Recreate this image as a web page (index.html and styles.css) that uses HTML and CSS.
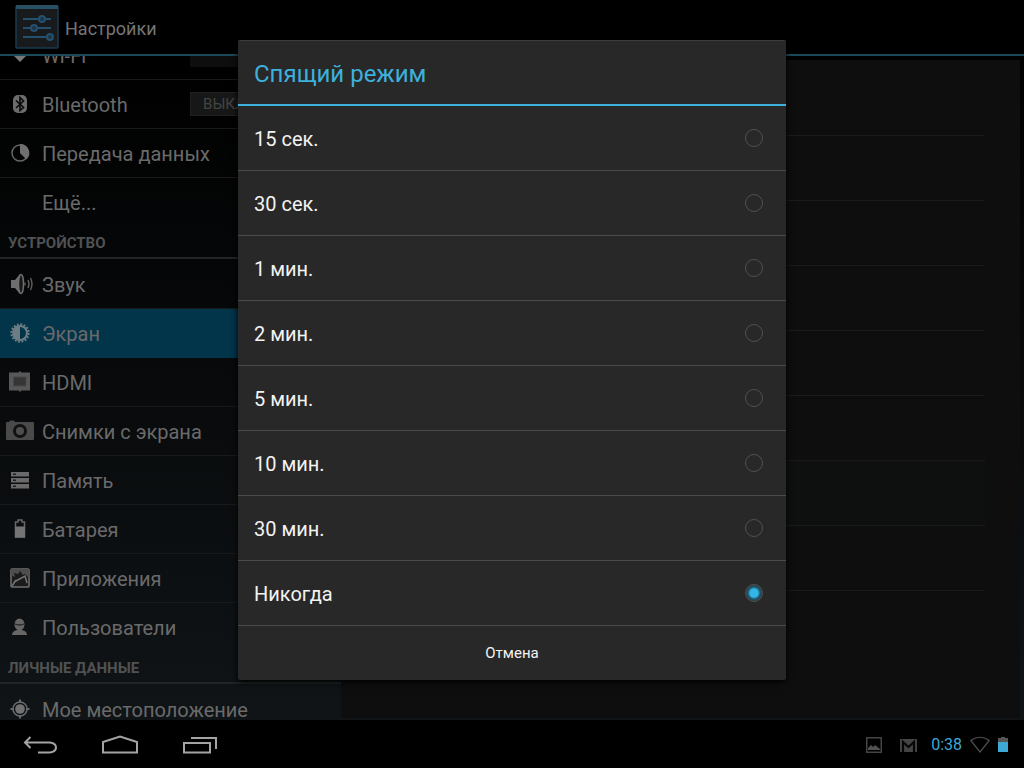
FILE: index.html
```html
<!DOCTYPE html>
<html lang="ru">
<head>
<meta charset="utf-8">
<title>Настройки</title>
<link rel="stylesheet" href="styles.css">
</head>
<body>
<header class="topbar">
  <svg class="app-icon" viewBox="0 0 44 44" aria-hidden="true">
    <rect x="1" y="1" width="42" height="42" rx="1" fill="#191a1b" stroke="#193a52" stroke-width="1.500"/>
    <rect x="1" y="0" width="42" height="4" rx="1" fill="#285063"/>
    <g stroke="#24506e" stroke-width="2" fill="#1d3444">
      <path d="M8 14h28M8 23h28M8 32h26"/>
      <circle cx="27" cy="14" r="3"/><circle cx="19" cy="23" r="3"/><circle cx="35" cy="32" r="3"/>
    </g>
  </svg>
  <h1 class="topbar-title">Настройки</h1>
</header>

<main class="content">
  <nav class="sidebar" aria-label="Разделы">
    <ul class="menu menu-scrolled">
      <li class="menu-row">
        <a class="menu-link" href="#wifi"><svg class="icon" viewBox="0 0 30 30" aria-hidden="true"><path d="M5 11a15 15 0 0 1 20 0L15 21z" fill="#777"/></svg><span>Wi-Fi</span></a>
        <button class="switch on" role="switch" aria-checked="true" aria-label="Wi-Fi"><span class="thumb"></span></button>
      </li>
      <li class="menu-row">
        <a class="menu-link" href="#bluetooth"><svg class="icon" viewBox="0 0 30 30" aria-hidden="true"><rect x="8" y="5" width="14" height="18" rx="5" fill="#6c6c6c"/><path d="M11 10.500l7.500 7-3.500 3V7.500l3.500 3.500L11 18" fill="none" stroke="#0b0b0b" stroke-width="1.600"/></svg><span>Bluetooth</span></a>
        <button class="switch" role="switch" aria-checked="false" aria-label="Bluetooth"><span class="thumb">ВЫКЛ</span></button>
      </li>
      <li class="menu-row"><a class="menu-link" href="#data"><svg class="icon" viewBox="0 0 30 30" aria-hidden="true"><circle cx="15" cy="14" r="8" fill="none" stroke="#666" stroke-width="1.500"/><path d="M15 5a9 9 0 0 1 6.500 15.500L15 14z" fill="#707070"/></svg><span>Передача данных</span></a></li>
      <li class="menu-row"><a class="menu-link" href="#more"><span class="icon"></span><span>Ещё...</span></a></li>
    </ul>
    <h2 class="category">УСТРОЙСТВО</h2>
    <ul class="menu">
      <li class="menu-row"><a class="menu-link" href="#sound"><svg class="icon" viewBox="0 0 30 30" aria-hidden="true"><path d="M6 10h4l5-6v20l-5-6H6z" fill="#6e6e6e"/><ellipse cx="16" cy="14" rx="2.500" ry="9.500" fill="#181818" stroke="#6e6e6e" stroke-width="1.500"/><path d="M20 12.500v3M23 10q2 4 0 8M25.500 8q3 6 0 12" fill="none" stroke="#666" stroke-width="1.300"/></svg><span>Звук</span></a></li>
      <li class="menu-row selected"><a class="menu-link" href="#display" aria-current="page"><svg class="icon" viewBox="0 0 30 30" aria-hidden="true"><circle cx="15" cy="14" r="8.700" fill="none" stroke="#6d7d84" stroke-width="2" stroke-dasharray="1.900 1.517"/><circle cx="15" cy="14" r="7" fill="none" stroke="#6d7d84" stroke-width="2"/><path d="M15 7a7 7 0 0 0 0 14z" fill="#6d7d84"/></svg><span>Экран</span></a></li>
      <li class="menu-row"><a class="menu-link" href="#hdmi"><svg class="icon" viewBox="0 0 30 30" aria-hidden="true"><path d="M4 4.500h10v-1h2v1h9v18h-9v1h-2v-1H4z" fill="#585858"/><rect x="8.500" y="9" width="12.500" height="9" fill="#363636" stroke="#484848"/></svg><span>HDMI</span></a></li>
      <li class="menu-row"><a class="menu-link" href="#screenshots"><svg class="icon" viewBox="0 0 30 30" aria-hidden="true"><path d="M1 6q0-1 1-1h2l1-1.500h4L10 5h18q1 0 1 1v16q0 1-1 1H2q-1 0-1-1z" fill="#4a4a4a"/><circle cx="15" cy="14" r="5.500" fill="#4e4e4e" stroke="#111" stroke-width="3"/></svg><span>Снимки с экрана</span></a></li>
      <li class="menu-row"><a class="menu-link" href="#storage"><svg class="icon" viewBox="0 0 30 30" aria-hidden="true"><path d="M6 6h18v4.500H6zM6 12h18v4.500H6zM6 18h18v4.500H6z" fill="#6a6a6a"/><path d="M8 8.200h3M8 14.200h3M8 20.200h3" stroke="#222" stroke-width="1.500"/></svg><span>Память</span></a></li>
      <li class="menu-row"><a class="menu-link" href="#battery"><svg class="icon" viewBox="0 0 30 30" aria-hidden="true"><path d="M10.500 7h2.500V5h4v2h2.500v15h-9z" fill="none" stroke="#686868" stroke-width="1.500"/><path d="M10 11.500h10v11H10z" fill="#747474"/></svg><span>Батарея</span></a></li>
      <li class="menu-row"><a class="menu-link" href="#apps"><svg class="icon" viewBox="0 0 30 30" aria-hidden="true"><rect x="6" y="5" width="18" height="18" rx="1" fill="#1b1b1b" stroke="#707070" stroke-width="1.500"/><path d="M6 5h18v9l-4-4-2 1-3-4-2 3-4-1 1 4-4-2z" fill="#4e4e4e"/><path d="M7 22l4-6M9 18l11-6 2 7" fill="none" stroke="#747474" stroke-width="1.500"/></svg><span>Приложения</span></a></li>
      <li class="menu-row"><a class="menu-link" href="#users"><svg class="icon" viewBox="0 0 30 30" aria-hidden="true"><path d="M7 22q0-4 5-5h5q5 1 5 5z" fill="#666"/><ellipse cx="14.500" cy="11.500" rx="5" ry="6" fill="#666"/><path d="M10 11q4.500 2 9 0" fill="none" stroke="#242424" stroke-width="1.300"/></svg><span>Пользователи</span></a></li>
    </ul>
    <h2 class="category">ЛИЧНЫЕ ДАННЫЕ</h2>
    <ul class="menu">
      <li class="menu-row"><a class="menu-link" href="#location"><svg class="icon" viewBox="0 0 30 30" aria-hidden="true"><circle cx="15" cy="14" r="7" fill="none" stroke="#686868" stroke-width="1.500"/><circle cx="15" cy="14" r="4.800" fill="#727272"/><path d="M15 4.500V8M15 20v3.500M5.500 14H9M21 14h3.500" stroke="#686868" stroke-width="2"/></svg><span>Мое местоположение</span></a></li>
    </ul>
  </nav>
  <section class="pane" aria-label="Экран">
    <div class="panel">
      <div class="panel-row first"></div>
      <div class="panel-row"></div>
      <div class="panel-row"></div>
      <div class="panel-row"></div>
      <div class="panel-row"></div>
      <div class="panel-row"></div>
      <div class="panel-row tinted"></div>
      <div class="panel-row"></div>
    </div>
  </section>
</main>

<footer class="navbar">
  <div class="nav-buttons">
    <button class="nav-button" aria-label="Назад"><svg width="34" height="20" viewBox="0 0 34 20"><path d="M7.500 2L2 7.500 7.500 13M2 7.500h25q6 1 6 5t-6 5H15" fill="none" stroke="#a4a4a4" stroke-width="2"/></svg></button>
    <button class="nav-button" aria-label="Домой"><svg width="36" height="20" viewBox="0 0 36 20"><path d="M1 17.500V7L18 1.500 35 7v10.500z" fill="none" stroke="#a4a4a4" stroke-width="2"/></svg></button>
    <button class="nav-button" aria-label="Недавние"><svg width="34" height="20" viewBox="0 0 34 20"><path d="M1 8h26v9.500H1zM8 3h25v11" fill="none" stroke="#a4a4a4" stroke-width="2"/></svg></button>
  </div>
  <div class="status">
    <svg width="16" height="18" viewBox="0 0 16 18" aria-hidden="true"><rect x=".750" y="1.750" width="14.500" height="14.500" fill="none" stroke="#444" stroke-width="1.500"/><path d="M2 14v-2l3-3 2 2 2-2 5 4v1z" fill="#505050"/></svg>
    <svg width="17" height="18" viewBox="0 0 17 18" aria-hidden="true"><path d="M0 3h17v13H0z" fill="#444"/><path d="M3 16V6l5.500 5L14 6v10" fill="none" stroke="#060606" stroke-width="2.200"/></svg>
    <span class="clock">0:38</span>
    <svg width="20" height="18" viewBox="0 0 20 18" aria-hidden="true"><path d="M.750 4.500q9.250-6.500 18.500 0L10 16z" fill="none" stroke="#505050" stroke-width="1.200"/></svg>
    <svg width="10" height="18" viewBox="0 0 10 18" aria-hidden="true"><path d="M0 2h3V1h4v1h3v4H0z" fill="#555"/><path d="M0 6h10v10H0z" fill="#3da9d4"/></svg>
  </div>
</footer>

<div class="overlay">
  <form class="dialog" role="dialog" aria-labelledby="dialog-title">
    <h2 class="dialog-title" id="dialog-title">Спящий режим</h2>
    <label class="option"><span class="option-text">15 сек.</span><input class="radio" type="radio" name="sleep"></label>
    <label class="option"><span class="option-text">30 сек.</span><input class="radio" type="radio" name="sleep"></label>
    <label class="option"><span class="option-text">1 мин.</span><input class="radio" type="radio" name="sleep"></label>
    <label class="option"><span class="option-text">2 мин.</span><input class="radio" type="radio" name="sleep"></label>
    <label class="option"><span class="option-text">5 мин.</span><input class="radio" type="radio" name="sleep"></label>
    <label class="option"><span class="option-text">10 мин.</span><input class="radio" type="radio" name="sleep"></label>
    <label class="option"><span class="option-text">30 мин.</span><input class="radio" type="radio" name="sleep"></label>
    <label class="option"><span class="option-text">Никогда</span><input class="radio" type="radio" name="sleep" checked></label>
    <button class="cancel" type="button">Отмена</button>
  </form>
</div>
</body>
</html>
```
FILE: styles.css
```css
* { box-sizing: border-box; }

body {
  margin: 0;
  height: 100vh;
  display: flex;
  flex-direction: column;
  overflow: hidden;
  background: #000;
  color: #6a6a6a;
  font-family: Roboto, "Noto Sans", sans-serif;
}

h1, h2, ul { margin: 0; padding: 0; font-weight: 400; }
ul { list-style: none; }
button { font-family: inherit; }

.topbar {
  flex: none;
  height: 56px;
  padding: 0 15px;
  display: flex;
  align-items: center;
  gap: 6px;
  border-bottom: 2px solid #1b4a5a;
}
.app-icon { width: 44px; height: 44px; }
.topbar-title { font-size: 18px; line-height: 24px; color: #757575; padding-top: 4px; }

.content {
  flex: 1;
  min-height: 0;
  display: grid;
  grid-template-columns: 1fr 2fr;
  overflow: hidden;
  background: linear-gradient(#000, #101417);
}
.sidebar { min-width: 0; min-height: 0; overflow: hidden; }

.menu { padding-top: 1px; }
/* The list is scrolled so that its first row is partly under the top bar. */
.menu-scrolled { margin-top: -26px; }
.menu-row {
  height: 49px;
  display: flex;
  align-items: center;
  justify-content: space-between;
  padding: 0 15px 0 5px;
  border-bottom: 1px solid #17191a;
}
.menu-row:last-child { border-bottom-color: transparent; }
.menu-row.selected { background: #02344a; border-bottom-color: #02344a; }
.menu-link {
  display: flex;
  align-items: center;
  gap: 7px;
  padding-top: 2px;
  color: inherit;
  text-decoration: none;
  font-size: 20px;
  line-height: 24px;
  white-space: nowrap;
}
.icon { width: 30px; height: 30px; flex: none; }
.category {
  height: 32px;
  padding: 4px 8px 0;
  border-bottom: 2px solid #222527;
  color: #505152;
  font-size: 15px;
  line-height: 24px;
  font-weight: 700;
}

.switch {
  width: 136px;
  height: 24px;
  padding: 0;
  display: flex;
  border: 0;
  background: #0e0e0e;
}
.switch.on { justify-content: flex-end; }
.thumb {
  width: 68px;
  border: 1px solid #202020;
  background: #171717;
  color: #444;
  font-size: 15px;
  line-height: 22px;
  text-align: center;
}

.pane { display: flex; padding: 4px 4px 2px 0; min-height: 0; }
.panel { flex: 1; padding-right: 35px; background: #0e0e0e; overflow: hidden; }
.panel-row { height: 65px; border-bottom: 1px solid #1a1a1a; }
.panel-row.first { height: 76px; }
.panel-row.tinted { background: #0d100f; }

.navbar {
  flex: none;
  height: 48px;
  padding: 2px 16px 0 23px;
  display: flex;
  align-items: center;
  justify-content: space-between;
  background: #000;
}
.nav-buttons { display: flex; gap: 45px; }
.nav-button { display: flex; padding: 0; border: 0; background: none; }
.status { display: flex; align-items: center; gap: 8px; }
.status svg:first-child { margin-right: 10px; }
.clock { margin-left: 6px; color: #3da9d4; font-size: 16px; line-height: 20px; }

.overlay {
  position: absolute;
  inset: 0 0 48px;
  display: flex;
  align-items: center;
  justify-content: center;
}
.dialog {
  width: 548px;
  max-width: 95%;
  border-top: 1px solid #3c3c3c;
  border-radius: 2px;
  background: #282828;
  color: #f3f3f3;
  box-shadow: 0 2px 6px #000;
}
.dialog-title {
  height: 65px;
  padding: 2px 16px 0;
  border-bottom: 2px solid #3eb0dc;
  color: #3eb0dc;
  font-size: 24px;
  line-height: 63px;
}
.option {
  height: 65px;
  padding: 0 23px 0 16px;
  display: flex;
  align-items: center;
  justify-content: space-between;
  border-bottom: 1px solid #4b4b4b;
  font-size: 20px;
  line-height: 24px;
}
.option-text { padding-top: 2px; }
.radio {
  appearance: none;
  width: 18px;
  height: 18px;
  margin: 0;
  border: 1px solid #505050;
  border-radius: 50%;
}
.radio:checked {
  background: radial-gradient(circle, #33b5e5 4px, #1c5a70 6px, #2a3c43 8px);
}
.cancel {
  width: 100%;
  height: 54px;
  padding: 0;
  border: 0;
  background: none;
  color: #f3f3f3;
  font-size: 15px;
  line-height: 20px;
}
```
